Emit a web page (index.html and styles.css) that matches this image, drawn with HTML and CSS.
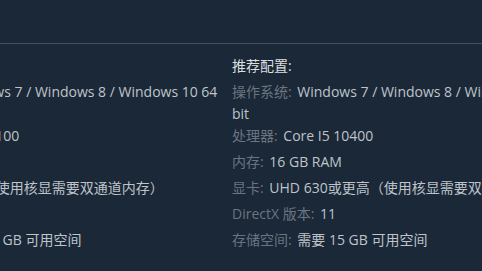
FILE: index.html
```html
<!DOCTYPE html>
<html lang="zh-CN">
<head>
<meta charset="utf-8">
<title>系统需求</title>
<link rel="stylesheet" href="styles.css">
</head>
<body>
<div class="sysreq">
  <div class="sysreq-tabs"></div>
  <div class="sysreq-cols">
    <div class="sysreq-col">
      <div class="sysreq-title">最低配置:</div>
      <ul class="sysreq-list">
        <li class="wrap"><span class="lbl">操作系统:</span> Windows 7 / Windows 8 / Windows 10 64 bit</li>
        <li><span class="lbl">处理器:</span> Core I3 4100</li>
        <li><span class="lbl">内存:</span> 8 GB RAM</li>
        <li><span class="lbl">显卡:</span> UHD 620（使用核显需要双通道内存）</li>
        <li><span class="lbl">DirectX 版本:</span> 11</li>
        <li><span class="lbl">存储空间:</span> 需要 15 GB 可用空间</li>
      </ul>
    </div>
    <div class="sysreq-col">
      <div class="sysreq-title">推荐配置:</div>
      <ul class="sysreq-list">
        <li class="wrap"><span class="lbl">操作系统:</span> Windows 7 / Windows 8 / Windows 10 64 bit</li>
        <li><span class="lbl">处理器:</span> Core I5 10400</li>
        <li><span class="lbl">内存:</span> 16 GB RAM</li>
        <li><span class="lbl">显卡:</span> UHD 630或更高（使用核显需要双通道内存）</li>
        <li><span class="lbl">DirectX 版本:</span> 11</li>
        <li><span class="lbl">存储空间:</span> 需要 15 GB 可用空间</li>
      </ul>
    </div>
  </div>
</div>
</body>
</html>
```
FILE: styles.css
```css
html, body {
  margin: 0;
  padding: 0;
  background: #1b2838;
  overflow: hidden;
}

body {
  font-family: "Open Sans", "Noto Sans CJK SC", sans-serif;
  font-size: 14px;
  color: #acb2b8;
}

.sysreq-tabs {
  height: 43px;
  border-bottom: 1px solid #3a5366;
}

.sysreq-cols {
  display: flex;
  gap: 6px;
  margin-left: -114px;
  padding-top: 11px;
}

.sysreq-col {
  flex: none;
  width: 340px;
}

.sysreq-title {
  color: #dcdedf;
  line-height: 22px;
  margin-bottom: 4px;
}

.sysreq-list {
  list-style: none;
  margin: 0;
  padding: 0;
}

.sysreq-list li {
  line-height: 21.5px;
  margin-bottom: 4.5px;
  color: #bec4ca;
}

.sysreq-list li.wrap {
  margin-bottom: 1px;
}

.lbl {
  color: #6a7580;
  margin-right: 2px;
}
```
